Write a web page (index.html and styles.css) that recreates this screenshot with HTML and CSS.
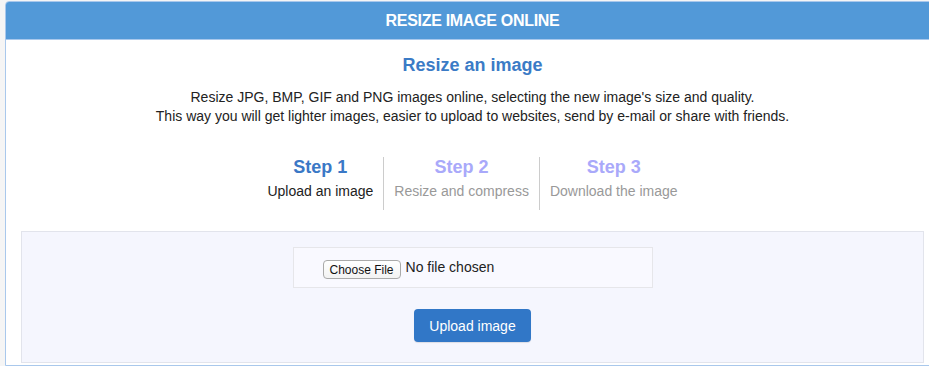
FILE: index.html
```html
<!DOCTYPE html>
<html lang="en">
<head>
    <meta charset="UTF-8">
    <meta name="viewport" content="width=device-width, initial-scale=1.0">
    <title>Resize image online</title>
    <link rel="stylesheet" href="styles.css">
</head>
<body>
    <div class="panel">
        <div class="panel-heading">RESIZE IMAGE ONLINE</div>

        <div class="panel-body">
            <h2>Resize an image</h2>
            <p class="intro">
                Resize JPG, BMP, GIF and PNG images online, selecting the new image's size and quality.<br>
                This way you will get lighter images, easier to upload to websites, send by e-mail or share with friends.
            </p>

            <div class="steps">
                <div class="step active">
                    <div class="step-title">Step 1</div>
                    <div class="step-text">Upload an image</div>
                </div>
                <div class="step">
                    <div class="step-title">Step 2</div>
                    <div class="step-text">Resize and compress</div>
                </div>
                <div class="step">
                    <div class="step-title">Step 3</div>
                    <div class="step-text">Download the image</div>
                </div>
            </div>

            <form class="upload-box" onsubmit="return false;">
                <div class="file-field">
                    <button type="button" class="choose-btn">Choose File</button>
                    <span class="file-name">No file chosen</span>
                </div>
                <button type="submit" class="btn-upload">Upload image</button>
            </form>
        </div>
    </div>
</body>
</html>
```

FILE: styles.css
```css
* {
    margin: 0;
    padding: 0;
    box-sizing: border-box;
}

body {
    font-family: 'Liberation Sans', Arial, sans-serif;
    background: #f5f5f5;
    color: #222;
    padding: 1px 0 0 5px;
    width: 950px;
    overflow: hidden;
}

.panel {
    width: 935px;
    background: #fff;
    border: 1px solid #a9c8ec;
    border-radius: 4px 4px 0 0;
    overflow: hidden;
}

.panel-heading {
    background: #5299d8;
    color: #fff;
    font-weight: bold;
    font-size: 16px;
    letter-spacing: -0.3px;
    text-align: center;
    height: 38px;
    line-height: 38px;
    border-bottom: 1px solid #a9c8ec;
}

.panel-body {
    padding: 15px 15px 2px;
    text-align: center;
}

.panel-body h2 {
    font-size: 18px;
    line-height: 20px;
    color: #3b7bc6;
    font-weight: bold;
}

.intro {
    font-size: 14px;
    line-height: 19px;
    margin-top: 13px;
    color: #222;
}

.steps {
    display: flex;
    justify-content: center;
    margin-top: 31px;
}

.step {
    padding: 0 10px 9px;
    border-left: 1px solid #ccc;
}

.step:first-child {
    border-left: none;
}

.step-title {
    font-size: 18px;
    line-height: 20px;
    font-weight: bold;
    color: #a9a9fa;
}

.step-text {
    font-size: 14px;
    line-height: 20px;
    margin-top: 4px;
    color: #999;
}

.step.active .step-title {
    color: #3a78c6;
}

.step.active .step-text {
    color: #222;
}

.upload-box {
    margin-top: 21px;
    background: #f5f6fe;
    border: 1px solid #e2e4ec;
    padding: 15px 0 20px;
    text-align: center;
}

.file-field {
    width: 360px;
    height: 41px;
    margin: 0 auto;
    background: #f9f9ff;
    border: 1px solid #e6e6ea;
    display: flex;
    align-items: flex-start;
    padding: 11px 0 0 29px;
    gap: 5px;
}

.choose-btn {
    font-family: 'Liberation Sans', Arial, sans-serif;
    font-size: 12px;
    height: 19px;
    margin-top: 1px;
    padding: 0 6px;
    background: linear-gradient(#fff, #f3f3f3);
    border: 1px solid #aaa;
    border-radius: 4px;
    color: #111;
}

.file-name {
    font-size: 14px;
    line-height: 16px;
    color: #222;
}

.btn-upload {
    display: inline-block;
    margin-top: 21px;
    width: 117px;
    height: 33px;
    background: #3177c7;
    color: #fff;
    border: none;
    border-radius: 4px;
    font-family: 'Liberation Sans', Arial, sans-serif;
    font-size: 14px;
    box-shadow: 0 1px 1px rgba(0, 0, 0, 0.1);
}
```
